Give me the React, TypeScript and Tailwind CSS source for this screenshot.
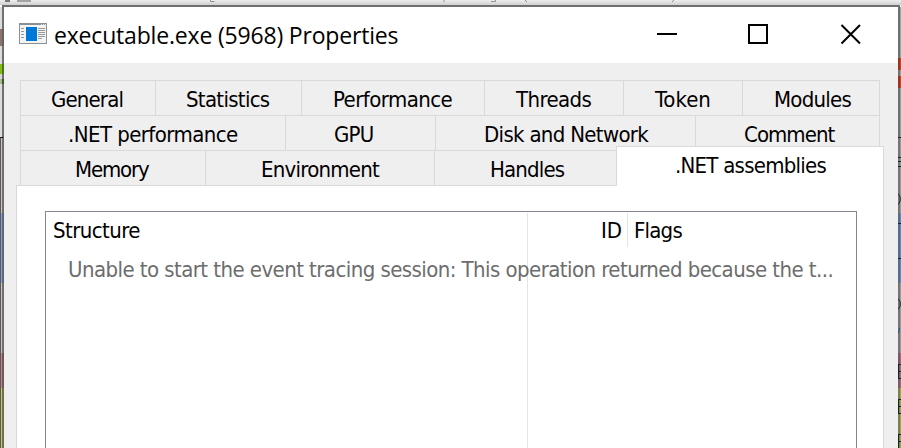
import React from "react";

type TabProps = { label: string; box: string };

function Tab({ label, box }: TabProps) {
  return (
    <div className={`h-[35px] shrink-0 border-l border-t border-[#d9d9d9] bg-[#efefef] pt-[3px] ${box}`}>
      <span className="block whitespace-nowrap leading-[32px]">{label}</span>
    </div>
  );
}

const rowOne: TabProps[] = [
  { label: "General", box: "w-[135px] pl-[30px] tracking-[-0.85px]" },
  { label: "Statistics", box: "w-[146px] pl-[30px] tracking-[-0.7px]" },
  { label: "Performance", box: "w-[183px] pl-[31px] tracking-[-0.56px]" },
  { label: "Threads", box: "w-[139px] pl-[31px] tracking-[-0.6px]" },
  { label: "Token", box: "w-[119px] pl-[31px] tracking-[0px]" },
  { label: "Modules", box: "w-[138px] border-r pl-[31px] tracking-[-0.75px]" },
];
const rowTwo: TabProps[] = [
  { label: ".NET performance", box: "w-[265px] pl-[47px]" },
  { label: "GPU", box: "w-[150px] pl-[48px] tracking-[-0.8px]" },
  { label: "Disk and Network", box: "w-[260px] pl-[48px] tracking-[-0.68px]" },
  { label: "Comment", box: "w-[185px] border-r pl-[48px] tracking-[-0.95px]" },
];
const rowThree: TabProps[] = [
  { label: "Memory", box: "w-[185px] pl-[54px] tracking-[-1.15px]" },
  { label: "Environment", box: "w-[229px] pl-[55px] tracking-[-0.75px]" },
  { label: "Handles", box: "w-[183px] pl-[55px] tracking-[-0.85px]" },
];

/* Slivers of the window behind, seen through the dialog's translucent frame. */
const leftEdge = [
  "h-[22px] bg-[#dcdcdc] border-[#707070]",
  "h-[17px] bg-[#8d7468] border-[#5f6468]",
  "h-[18px] bg-[#dcdcdc] border-[#707070]",
  "h-[10px] bg-[#86b818] border-[#4d7420]",
  "h-[5px] bg-[#d5d8d0] border-[#707070]",
  "h-[5px] bg-[#aab98e] border-[#3f5726]",
  "h-[53px] bg-[#dcdcdc] border-[#707070]",
  "h-[76px] border-l bg-[#c9c5c2] border-r-[#736e6b] border-l-[#5a5a5a] border-t",
  "h-[70px] border-l bg-[#8ea4cb] border-r-[#59677f] border-l-[#5a5a5a]",
  "h-[70px] border-l bg-[#c9c5c2] border-r-[#736e6b] border-l-[#5a5a5a]",
  "h-[35px] border-l bg-[#bd8790] border-r-[#765459] border-l-[#5a5a5a]",
  "h-[60px] border-l bg-[#c5c57e] border-r-[#72723f] border-l-[#5a5a5a]",
];

const rightEdge = [
  "h-[51px] bg-[#a0a0a0] border-[#707070]",
  "h-[12px] bg-[#bd4534] border-[#983425]",
  "h-[6px] bg-[#aaa09e] border-[#77706e]",
  "h-[12px] bg-[#bd4534] border-[#983425]",
  "h-[49px] bg-[#9c9c9c] border-[#707070]",
  "h-px bg-[#222222] border-[#222222]",
  "h-[75px] bg-[#9d9a98] border-[#777472]",
  "h-[70px] bg-[#7286aa] border-[#596c8e]",
  "h-[70px] bg-[#9d9a98] border-[#777472]",
  "h-[35px] bg-[#9b717b] border-[#7f5861]",
  "h-[60px] bg-[#a2a267] border-[#7f7f4a]",
];

export default function App() {
  return (
    <div className="relative h-[448px] w-[901px] overflow-hidden font-['DejaVu_Sans_Condensed','DejaVu_Sans',sans-serif] text-[22px] tracking-[-0.56px] text-black">
      <svg className="block" width="901" height="5" viewBox="0 0 901 5">
        <defs>
          <linearGradient id="shade" x1="0" y1="0" x2="0" y2="1">
            <stop offset="0" stopColor="#efefef" />
            <stop offset="1" stopColor="#cfcfcf" />
          </linearGradient>
        </defs>
        <path fill="url(#shade)" d="M0 0h901v5H0z" />
        <path fill="#777" d="M5 0h5v2H5z" />
        <path fill="#a3a3a3" d="M17 0h14v2H17z" />
        <path fill="none" stroke="#909090" d="M210.5 0v1.5h4M444.5 0l-1 2M491 1.5h4.500v-1.500M525 0l2 2M674 0l-2 2" />
      </svg>
      <div className="ml-[2px] h-[2px] w-[898px] bg-[#707070]" />
      <div className="flex h-[441px]">
        <div className="w-[4px] shrink-0 bg-[#dcdcdc]">
          {leftEdge.map((c, i) => <div key={i} className={`border-r-2 ${c}`} />)}
        </div>
        <div className="h-[441px] w-[894px] shrink-0 bg-[#efefef]">
          <header className="flex h-[56px] items-center bg-white pl-[15px] font-['Open_Sans','Noto_Sans',sans-serif]">
            <svg className="-mt-[3px] shrink-0" width="28" height="21" viewBox="0 0 28 21" shapeRendering="crispEdges">
              <path fill="#8d9093" d="M0 0h28v21H0z" />
              <path fill="#f4f4f4" d="M1 2h26v18H1z" />
              <path fill="#0078d7" d="M7 4h11v14H7z" />
              <path stroke="#999" d="M2 5.5h3M2 8.500h3M2 11.500h3M2 14.500h3M19 5.5h7M19 7.5h7M19 9.5h7M19 11.5h7M19 13.5h7M19 15.5h4" />
              <path stroke="#e5e5e5" d="M22 1.5h1M24 1.5h1M26 1.5h1" />
            </svg>
            <h1 className="ml-[7px] w-[603px] shrink-0 whitespace-nowrap text-[23px] leading-[30px] tracking-[-0.18px]">executable.exe (5968) Properties</h1>
            <svg className="shrink-0" width="220" height="30" viewBox="0 0 220 30" fill="none" stroke="black" strokeWidth="2">
              <path d="M0 14h20M92 5h18v18H92z" shapeRendering="crispEdges" />
              <path d="M184.500 5l18.500 18.500M203 5l-18.500 18.500" />
            </svg>
          </header>
          <div className="pt-[17px]">
            <nav className="pl-4">
              <div className="flex">{rowOne.map((t) => <Tab key={t.label} {...t} />)}</div>
              <div className="flex">{rowTwo.map((t) => <Tab key={t.label} {...t} />)}</div>
              <div className="flex">
                {rowThree.map((t) => <Tab key={t.label} {...t} />)}
                <div className="z-10 -ml-px -mt-[4px] h-[40px] w-[268px] shrink-0 border-x border-t border-[#d9d9d9] bg-white pl-[58px] pt-[3px] tracking-[-0.75px]">
                  <span className="block whitespace-nowrap leading-[32px]">.NET assemblies</span>
                </div>
              </div>
            </nav>
            <main className="-mt-px ml-[12px] h-[280px] w-[868px] border border-[#d9d9d9] bg-white pl-[28px] pt-[25px]">
              <div className="h-[260px] w-[812px] border border-[#828790]">
                <div className="flex h-[35px] pt-px leading-[35px]">
                  <span className="h-[34px] w-[482px] border-r border-[#e3e3e3] pl-[7px]">Structure</span>
                  <span className="h-[34px] w-[100px] border-r border-[#e3e3e3] pr-[5px] text-right tracking-normal">ID</span>
                  <span className="pl-[6px] tracking-[-0.8px]">Flags</span>
                </div>
                <div className="flex h-[220px]">
                  <div className="w-[482px] border-r border-[#e3e3e3] pl-[22px] pt-[6px]">
                    <span className="block whitespace-nowrap leading-[34px] text-[#6d6d6d]">Unable to start the event tracing session: This operation returned because the t...</span>
                  </div>
                </div>
              </div>
            </main>
          </div>
        </div>
        <div className="w-[3px] shrink-0">
          {rightEdge.map((c, i) => <div key={i} className={`border-l-2 ${c}`} />)}
        </div>
      </div>
      {/* Grid lines and cell content edges that show over the right frame. */}
      <svg className="absolute right-0 top-0" width="3" height="448" viewBox="0 0 3 448" fill="none" stroke="#18222a">
        <path d="M0 223.500h3M0 258.500h3M0 157.500h3M0 161.500h3M0 166.500h3M0.500 364v15M0 364.500h3M0 371.500h3M0 378.500h3M0.500 399v15M0 399.500h3M0 406.500h3M0 413.500h3M0.500 434v14M0 434.500h3M0 441.500h3" />
        <path d="M0 194c3 1 3 9 0 10M0 299c3 1 3 9 0 10" />
        <path stroke="#27557f" d="M1.500 328l-1 5" />
      </svg>
    </div>
  );
}
